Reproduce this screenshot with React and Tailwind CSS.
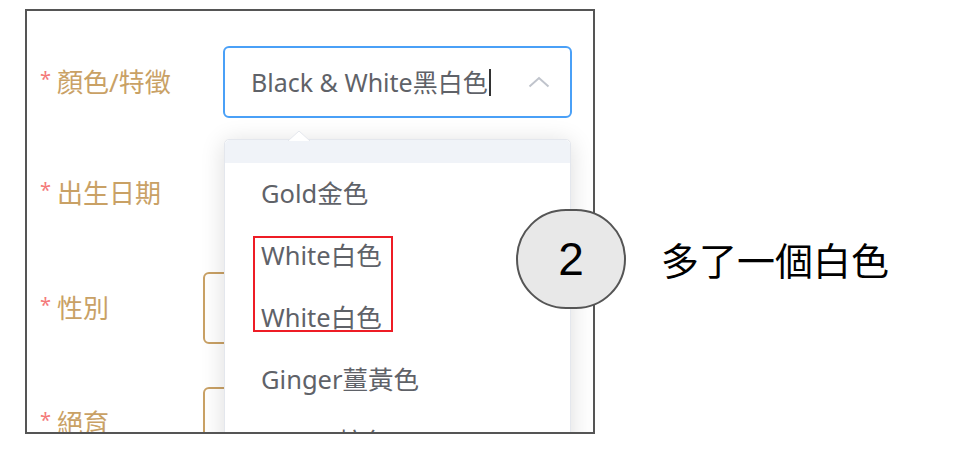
import React from "react";

const ui = "font-['Noto_Sans','Noto_Sans_CJK_TC',sans-serif]";

function Label({ text, width }) {
  return (
    <div className={`flex items-center pl-[13px] shrink-0 ${width}`}>
      <span className="text-[#f47a7a] text-[20px] leading-none mr-[6px] -mt-[6px]">*</span>
      <span className="text-[#c9a165] text-[26px] leading-none">{text}</span>
    </div>
  );
}

export default function App() {
  const options = ["Gold金色", "White白色", "White白色", "Ginger薑黃色", "Brown棕色"];
  return (
    <div className={`w-[962px] h-[450px] bg-white flex items-start ${ui}`}>
      <div className="ml-[25px] mt-[9px] w-[570px] h-[425px] shrink-0 border-2 border-[#555] bg-white overflow-hidden relative">
        <div className="flex flex-col pt-[35px]">
          <div className="flex h-[72px]">
            <Label text="顏色/特徵" width="w-[196px]" />
            <div className="w-[349px] h-[72px] border-2 border-[#4aa0f7] rounded-[6px] flex items-center pl-[26px] pr-[20px]">
              <span className="text-[#5f6268] text-[25px] leading-none">Black &amp; White黑白色</span>
              <span className="w-[2px] h-[27px] bg-[#333] ml-[1px]" />
              <svg className="ml-auto" width="22" height="12" viewBox="0 0 22 12" fill="none">
                <path d="M1.5 10.5 L11 2 L20.5 10.5" stroke="#c0c4cc" strokeWidth="2" />
              </svg>
            </div>
          </div>
          <div className="flex h-[72px] mt-[39px]">
            <Label text="出生日期" width="w-[176px]" />
          </div>
          <div className="flex h-[72px] mt-[43px]">
            <Label text="性別" width="w-[176px]" />
            <div className="w-[340px] h-[72px] border-2 border-[#c9a165] rounded-[6px]" />
          </div>
          <div className="flex h-[72px] mt-[43px]">
            <Label text="絕育" width="w-[176px]" />
            <div className="w-[340px] h-[72px] border-2 border-[#c9a165] rounded-[6px]" />
          </div>
        </div>

        <div className="absolute left-[197px] top-[128px] w-[347px] h-[380px] bg-white border border-[#e4e7ed] rounded-[5px] shadow-[0_3px_24px_rgba(0,0,0,0.14)]">
          <svg className="absolute left-[63px] -top-[9px]" width="22" height="10" viewBox="0 0 22 10">
            <polygon points="0,10 11,0 22,10" fill="#ffffff" />
            <polyline points="0,10 11,0 22,10" fill="none" stroke="#e4e7ed" strokeWidth="1" />
          </svg>
          <div className="h-[23px] bg-[#f0f3f8] rounded-t-[5px]" />
          <div className="flex flex-col">
            {options.map((o, i) => (
              <div key={i} className="h-[62px] flex items-center pl-[36px] text-[#5f6268] text-[25.5px] leading-none">
                {o}
              </div>
            ))}
          </div>
          <div className="absolute left-[28px] top-[96px] w-[140px] h-[96px] border-2 border-[#ee1c25]" />
        </div>
      </div>

      <div className="relative z-10 -ml-[79px] mt-[209px] flex items-center">
        <div className="w-[110px] h-[100px] rounded-full border-2 border-[#555] bg-[#e8e8e8] flex items-center justify-center">
          <span className="font-['Liberation_Sans',Arial,sans-serif] text-[46px] leading-none text-black">2</span>
        </div>
        <span className="ml-[35px] font-['Noto_Sans_CJK_TC',sans-serif] text-[38px] leading-none text-black">多了一個白色</span>
      </div>
    </div>
  );
}
